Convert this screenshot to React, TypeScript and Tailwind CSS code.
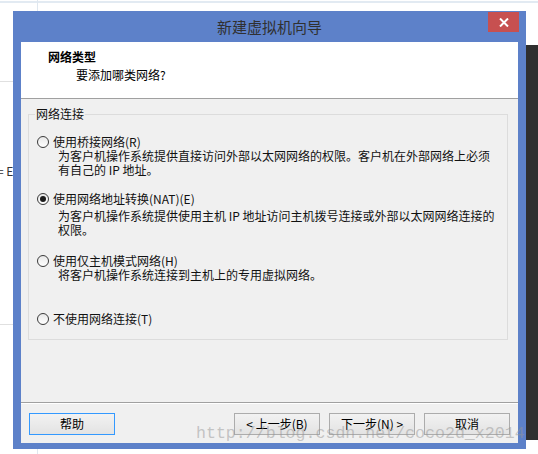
import React from "react";

function Radio({ checked }: { checked?: boolean }) {
  return (
    <span className="w-[12px] h-[12px] shrink-0 rounded-full border border-[#3a3a3a] bg-gradient-to-b from-[#e8e8e8] to-white flex items-center justify-center">
      {checked && <span className="w-[6px] h-[6px] rounded-full bg-[#1a1a1a]" />}
    </span>
  );
}

function OptionLabel({ checked, text, className }: { checked?: boolean; text: string; className?: string }) {
  return (
    <div className={"flex items-center h-[14px] " + (className ?? "")}>
      <Radio checked={checked} />
      <span className="ml-[4px] leading-[14px] whitespace-nowrap">{text}</span>
    </div>
  );
}

function Desc({ lines, className }: { lines: string[]; className?: string }) {
  return (
    <div className={"pl-[21px] " + (className ?? "")}>
      {lines.map((l, i) => (
        <div key={i} className="h-[14px] leading-[14px] whitespace-nowrap">
          {l}
        </div>
      ))}
    </div>
  );
}

function Btn({ children, focused }: { children: React.ReactNode; focused?: boolean }) {
  return (
    <div
      className={
        "w-[86px] h-[22px] flex items-center justify-center border bg-gradient-to-b from-[#f2f2f2] to-[#e3e3e3] text-[12px] text-black " +
        (focused ? "border-[#3399ff]" : "border-[#acacac]")
      }
    >
      {children}
    </div>
  );
}

export default function App() {
  return (
    <div className="relative w-[538px] h-[454px] bg-white overflow-hidden font-['Noto_Sans_CJK_SC','Noto_Sans',sans-serif] text-[12px] text-[#111]">
      {/* background page decorations */}
      <div className="absolute left-0 top-[1px] w-full h-[2px] bg-[#e2eaf2]" />
      <div className="absolute left-[37px] top-0 w-px h-full bg-[#dfe7ef]" />
      <div className="absolute left-0 top-[81px] w-[14px] h-px bg-[#e0e0e0]" />
      <div className="absolute left-0 top-[324px] w-[14px] h-px bg-[#e0e0e0]" />
      <div className="absolute left-[-3px] top-[163px] leading-[16px] text-[12px] text-[#333] whitespace-nowrap">= E</div>
      <div className="absolute left-[526px] top-[45px] w-[12px] h-[395px] bg-[#2f2f2f]" />

      {/* dialog window */}
      <div className="absolute left-[13px] top-[11px] w-[513px] h-[438px] bg-[#5d81c9] flex flex-col">
        <div className="relative h-[31px] shrink-0 flex justify-center pt-[6px]">
          <span className="text-[15px] leading-[20px] text-[#303030]">新建虚拟机向导</span>
          <div className="absolute right-[7px] top-[1px] w-[31px] h-[20px] bg-[#c75050] flex items-center justify-center">
            <svg width="10" height="9" viewBox="0 0 10 9">
              <path d="M1 0.5 L9 8.5 M9 0.5 L1 8.5" stroke="white" strokeWidth="2" />
            </svg>
          </div>
        </div>

        <div className="mx-[8px] w-[497px] h-[401px] flex flex-col bg-[#f0f0f0]">
          {/* header */}
          <div className="h-[57px] shrink-0 bg-white border-b border-[#a0a0a0] pt-[8px]">
            <div className="pl-[27px] h-[14px] leading-[14px] font-bold text-black">网络类型</div>
            <div className="pl-[55px] mt-[4px] h-[14px] leading-[14px] text-black">要添加哪类网络?</div>
          </div>

          {/* content */}
          <div className="h-[303px] shrink-0 pt-[15px] pl-[7px] pr-[10px]">
            <div className="relative h-[226px] border border-[#dcdcdc] pt-[20px] pl-[8px]">
              <span className="absolute left-[6px] top-[-8px] px-[1px] bg-[#f0f0f0] leading-[14px]">网络连接</span>
              <OptionLabel text="使用桥接网络(R)" />
              <Desc
                lines={[
                  "为客户机操作系统提供直接访问外部以太网网络的权限。客户机在外部网络上必须",
                  "有自己的 IP 地址。",
                ]}
              />
              <OptionLabel checked text="使用网络地址转换(NAT)(E)" className="mt-[15px]" />
              <Desc
                className="mt-[3px]"
                lines={[
                  "为客户机操作系统提供使用主机 IP 地址访问主机拨号连接或外部以太网网络连接的",
                  "权限。",
                ]}
              />
              <OptionLabel text="使用仅主机模式网络(H)" className="mt-[17px]" />
              <Desc lines={["将客户机操作系统连接到主机上的专用虚拟网络。"]} />
              <OptionLabel text="不使用网络连接(T)" className="mt-[30px]" />
            </div>
          </div>

          {/* separator */}
          <div className="h-px shrink-0 bg-[#a0a0a0]" />
          <div className="h-px shrink-0 bg-white" />

          {/* buttons */}
          <div className="h-[39px] shrink-0 pt-[9px] px-[8px] flex items-start">
            <Btn focused>帮助</Btn>
            <div className="flex-1" />
            <Btn>&lt; 上一步(B)</Btn>
            <div className="w-[9px]" />
            <Btn>下一步(N) &gt;</Btn>
            <div className="w-[9px]" />
            <Btn>取消</Btn>
          </div>
        </div>
      </div>

      {/* watermark */}
      <div className="absolute left-[196px] top-[425px] font-['Liberation_Mono',monospace] text-[16.6px] leading-[18px] text-[rgba(150,150,150,0.5)] whitespace-nowrap pointer-events-none">
        http://blog.csdn.net/coco2d_x2014
      </div>
    </div>
  );
}
